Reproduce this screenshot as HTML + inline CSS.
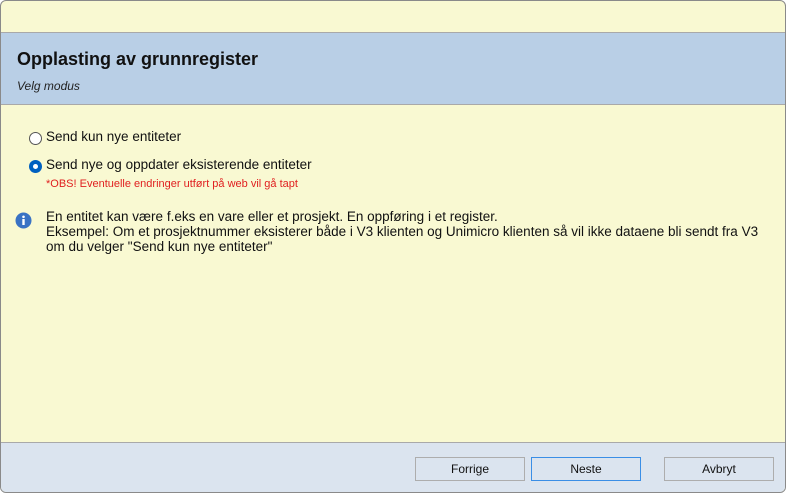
<!DOCTYPE html>
<html><head><style>
html,body{margin:0;padding:0;}
body{width:786px;height:493px;position:relative;overflow:hidden;background:#fff;font-family:"Liberation Sans",sans-serif;}
.win{position:absolute;left:0;top:0;width:784px;height:491px;border:1px solid #8a8a8a;border-radius:6px;background:#f9f9d2;overflow:hidden;}
.hdr{position:absolute;left:0;top:31px;width:784px;height:71px;background:#b9cfe6;border-top:1px solid #a9a9a9;border-bottom:1px solid #a9a9a9;}
.title{position:absolute;left:16px;top:16px;font-size:18px;font-weight:bold;color:#111;}
.sub{position:absolute;left:16px;top:46px;font-size:12px;font-style:italic;color:#222;}
.t{position:absolute;font-size:13.5px;color:#111;white-space:nowrap;}
.radio{position:absolute;width:11px;height:11px;border:1px solid #555;border-radius:50%;background:#fff;}
.radio.on{border-color:#0060c0;background:#0060c0;}
.radio.on::after{content:"";position:absolute;left:3px;top:3px;width:5px;height:5px;border-radius:50%;background:#fff;}
.foot{position:absolute;left:0;top:441px;width:784px;height:51px;background:#dbe4ef;border-top:1px solid #a9a9a9;}
.btn{position:absolute;top:14px;width:108px;height:22px;border:1px solid #adadad;background:#dbe4ef;font-size:12px;text-align:center;line-height:22px;color:#111;}
</style></head><body>
<div class="win">
<div class="hdr"><div class="title">Opplasting av grunnregister</div><div class="sub">Velg modus</div></div>
<div class="radio" style="left:28px;top:131px"></div>
<div class="t" style="left:45px;top:128px">Send kun nye entiteter</div>
<div class="radio on" style="left:28px;top:159px"></div>
<div class="t" style="left:45px;top:156px">Send nye og oppdater eksisterende entiteter</div>
<div class="t" style="left:45px;top:177px;font-size:11px;color:#e02020">*OBS! Eventuelle endringer utført på web vil gå tapt</div>
<svg style="position:absolute;left:14px;top:211px" width="17" height="17" viewBox="0 0 17 17"><circle cx="8.5" cy="8.5" r="8" fill="#3a73c4"/><circle cx="8.5" cy="4.8" r="1.3" fill="#fff"/><rect x="7.3" y="7" width="2.4" height="6" fill="#fff"/></svg>
<div class="t" style="left:45px;top:208px;line-height:15px">En entitet kan være f.eks en vare eller et prosjekt. En oppføring i et register.<br>Eksempel: Om et prosjektnummer eksisterer både i V3 klienten og Unimicro klienten så vil ikke dataene bli sendt fra V3<br>om du velger  "Send kun nye entiteter"</div>
<div class="foot">
<div class="btn" style="left:414px">Forrige</div>
<div class="btn" style="left:530px;border-color:#3a8ee6">Neste</div>
<div class="btn" style="left:663px">Avbryt</div>
</div>
</div>
</body></html>
